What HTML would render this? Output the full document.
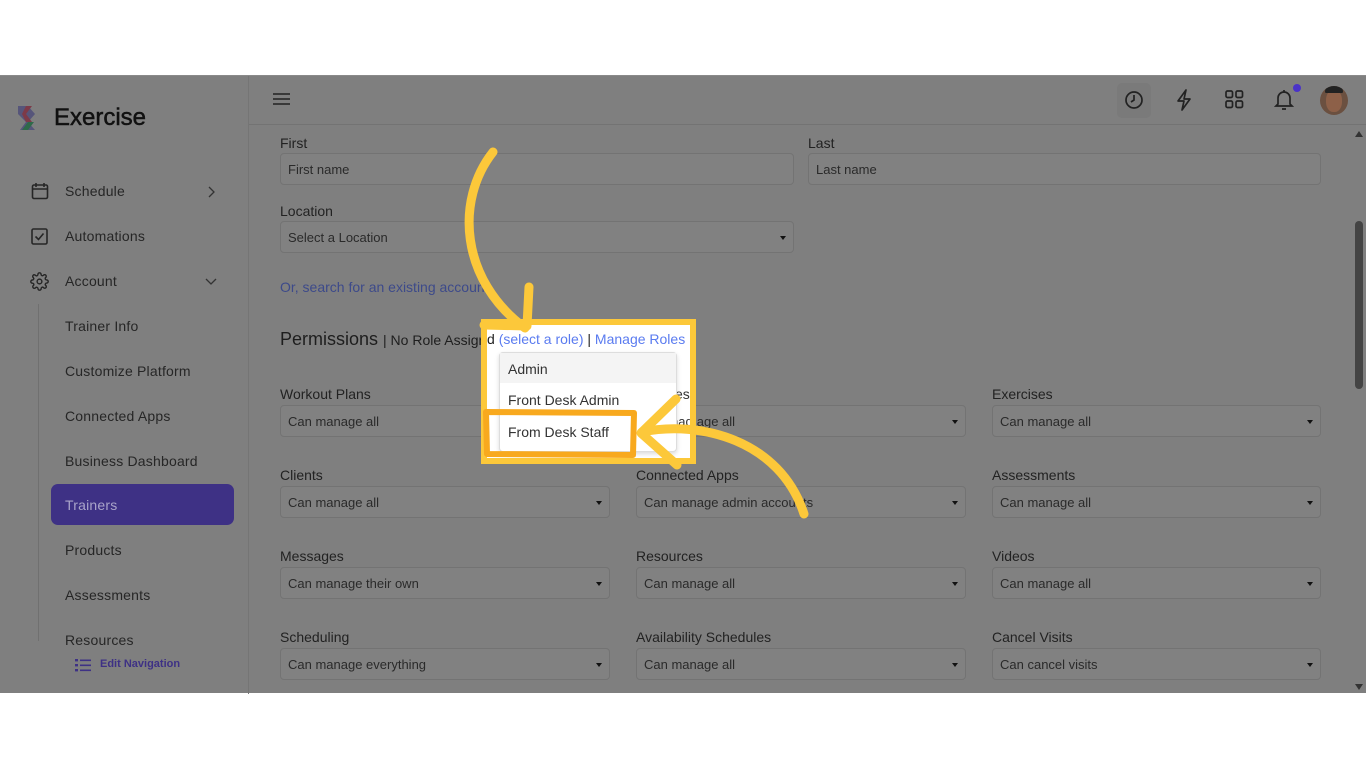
<!DOCTYPE html>
<html><head><meta charset="utf-8"><style>
*{box-sizing:border-box;margin:0;padding:0}
body{width:1366px;height:768px;background:#fff;position:relative;overflow:hidden;font-family:"Liberation Sans",Arial,sans-serif}
.app{position:absolute;left:0;top:75px;width:1366px;height:618px;background:#7f7f7f;border-top:1px solid #8a8a8a}
.side{position:absolute;left:0;top:0;width:249px;height:618px;border-right:1px solid #757575}
.a{position:absolute}
.nav{position:absolute;left:65px;font-size:14px;color:#262626;letter-spacing:.2px}
.lbl{position:absolute;font-size:14px;color:#222}
.in{position:absolute;height:32px;border:1px solid #737373;border-radius:4px;background:#818181;font-size:13px;color:#2a2a2a;padding:8px 7px;line-height:15px}
.in.s:after{content:"";position:absolute;right:7px;top:14px;border:3px solid transparent;border-top:4px solid #111}
</style></head><body>
<div class="app">
 <div class="side">
  <svg class="a" style="left:17px;top:28px" width="28" height="30" viewBox="0 0 28 30"><path d="M1 2h10l7 8-7 8 7 8H3l6-8-8-8z" fill="#56557a"/><path d="M9 2h6l-6 8 6 8H9l-4-8z" fill="#7d3a48"/><path d="M11 18h6l-6 8h-6z" fill="#2f6a4a"/></svg>
  <div class="a" style="left:54px;top:28px;font-size:24px;color:#111;-webkit-text-stroke:.5px #111">Exercise</div>
  <svg class="a" style="left:31px;top:106px" width="18" height="18" viewBox="0 0 18 18" fill="none" stroke="#262626" stroke-width="1.6"><rect x="1.5" y="3" width="15" height="13.5" rx="1.5"/><path d="M1.5 7h15M5 1v4M13 1v4"/></svg>
  <div class="nav" style="top:107px">Schedule</div>
  <svg class="a" style="left:206px;top:110px" width="10" height="12" viewBox="0 0 10 12" fill="none" stroke="#333" stroke-width="1.3"><path d="M3 1l5 5-5 5"/></svg>
  <svg class="a" style="left:31px;top:152px" width="17" height="17" viewBox="0 0 17 17" fill="none" stroke="#262626" stroke-width="1.6"><rect x="1" y="1" width="15" height="15" rx="1.5"/><path d="M4.5 8.5l3 3 5-6"/></svg>
  <div class="nav" style="top:152px">Automations</div>
  <svg class="a" style="left:30px;top:196px" width="19" height="19" viewBox="0 0 24 24" fill="none" stroke="#262626" stroke-width="1.8"><circle cx="12" cy="12" r="3"/><path d="M19.4 15a1.7 1.7 0 00.3 1.8l.1.1a2 2 0 11-2.8 2.8l-.1-.1a1.7 1.7 0 00-1.8-.3 1.7 1.7 0 00-1 1.5V21a2 2 0 11-4 0v-.1a1.7 1.7 0 00-1.1-1.5 1.7 1.7 0 00-1.8.3l-.1.1a2 2 0 11-2.8-2.8l.1-.1a1.7 1.7 0 00.3-1.8 1.7 1.7 0 00-1.5-1H3a2 2 0 110-4h.1a1.7 1.7 0 001.5-1.1 1.7 1.7 0 00-.3-1.8l-.1-.1a2 2 0 112.8-2.8l.1.1a1.7 1.7 0 001.8.3H9a1.7 1.7 0 001-1.5V3a2 2 0 114 0v.1a1.7 1.7 0 001 1.5 1.7 1.7 0 001.8-.3l.1-.1a2 2 0 112.8 2.8l-.1.1a1.7 1.7 0 00-.3 1.8V9a1.7 1.7 0 001.5 1H21a2 2 0 110 4h-.1a1.7 1.7 0 00-1.5 1z"/></svg>
  <div class="nav" style="top:197px">Account</div>
  <svg class="a" style="left:205px;top:200px" width="12" height="10" viewBox="0 0 12 10" fill="none" stroke="#333" stroke-width="1.3"><path d="M1 3l5 5 5-5"/></svg>
  <div class="a" style="left:38px;top:228px;width:1px;height:337px;background:#707070"></div>
  <div class="nav" style="top:242px">Trainer Info</div>
  <div class="nav" style="top:287px">Customize Platform</div>
  <div class="nav" style="top:332px">Connected Apps</div>
  <div class="nav" style="top:377px">Business Dashboard</div>
  <div class="a" style="left:51px;top:408px;width:183px;height:41px;background:#3e3185;border-radius:7px"></div>
  <div class="nav" style="top:421px;color:#a9a4c9">Trainers</div>
  <div class="nav" style="top:466px">Products</div>
  <div class="nav" style="top:511px">Assessments</div>
  <div class="nav" style="top:556px">Resources</div>
  <svg class="a" style="left:75px;top:582px" width="16" height="14" viewBox="0 0 16 14" fill="#3e3185"><rect x="0" y="1" width="3" height="2.4"/><rect x="0" y="6" width="3" height="2.4"/><rect x="0" y="11" width="3" height="2.4"/><rect x="5" y="1.5" width="11" height="1.6"/><rect x="5" y="6.5" width="11" height="1.6"/><rect x="5" y="11.5" width="11" height="1.6"/></svg>
  <div class="a" style="left:100px;top:582px;font-size:11px;color:#3e3185;font-weight:bold">Edit Navigation</div>
 </div>
 <div class="a" style="left:249px;top:48px;width:1117px;height:1px;background:#737373"></div>
 <svg class="a" style="left:273px;top:16px" width="17" height="14" viewBox="0 0 17 14" stroke="#222" stroke-width="1.6"><path d="M0 2h17M0 7h17M0 12h17"/></svg>
 <div class="a" style="left:1117px;top:7px;width:34px;height:35px;background:#7a7a7a;border-radius:5px"></div>
 <svg class="a" style="left:1124px;top:14px" width="20" height="20" viewBox="0 0 20 20" fill="none" stroke="#222" stroke-width="1.7"><circle cx="10" cy="10" r="8"/><path d="M10 5v5l-3 2"/></svg>
 <svg class="a" style="left:1175px;top:13px" width="18" height="22" viewBox="0 0 18 22" fill="none" stroke="#222" stroke-width="1.7" stroke-linejoin="round"><path d="M11 1L3 12h6l-2 9 8-11H9z"/></svg>
 <svg class="a" style="left:1225px;top:14px" width="19" height="19" viewBox="0 0 19 19" fill="none" stroke="#222" stroke-width="1.7"><rect x="1" y="1" width="6.5" height="6.5" rx="1.5"/><rect x="11" y="1" width="6.5" height="6.5" rx="1.5"/><rect x="1" y="11" width="6.5" height="6.5" rx="1.5"/><rect x="11" y="11" width="6.5" height="6.5" rx="1.5"/></svg>
 <svg class="a" style="left:1274px;top:13px" width="20" height="22" viewBox="0 0 20 22" fill="none" stroke="#222" stroke-width="1.7"><path d="M4 15V9a6 6 0 0112 0v6l2 2H2z M8 20h4M10 1v2"/></svg>
 <div class="a" style="left:1293px;top:8px;width:8px;height:8px;border-radius:50%;background:#4a32c8"></div>
 <div class="a" style="left:1320px;top:10px;width:28px;height:29px;border-radius:50%;background:#6b5040;overflow:hidden"><div class="a" style="left:6px;top:4px;width:16px;height:22px;border-radius:45%;background:#8d6048"></div><div class="a" style="left:5px;top:0;width:18px;height:7px;background:#222;border-radius:8px 8px 2px 2px"></div></div>
 <div class="a" style="left:1355px;top:55px;border:4px solid transparent;border-bottom:6px solid #333;border-top:0"></div>
 <div class="a" style="left:1355px;top:145px;width:8px;height:168px;background:#444;border-radius:4px"></div>
 <div class="a" style="left:1355px;top:608px;border:4px solid transparent;border-top:6px solid #333;border-bottom:0"></div>

 <div class="lbl" style="left:280px;top:59px">First</div>
 <div class="in" style="left:280px;top:77px;width:514px">First name</div>
 <div class="lbl" style="left:808px;top:59px">Last</div>
 <div class="in" style="left:808px;top:77px;width:513px">Last name</div>
 <div class="lbl" style="left:280px;top:127px">Location</div>
 <div class="in s" style="left:280px;top:145px;width:514px">Select a Location</div>
 <div class="a" style="left:280px;top:203px;font-size:14px;color:#3d4a8a">Or, search for an existing account</div>
 <div class="a" style="left:280px;top:253px;font-size:18px;color:#1e1e1e">Permissions <span style="font-size:14px">| No Role Assigned</span></div>

 <div class="lbl" style="left:280px;top:310px">Workout Plans</div><div class="in s" style="left:280px;top:329px;width:330px">Can manage all</div>
 <div class="lbl" style="left:636px;top:310px">Activities</div><div class="in s" style="left:636px;top:329px;width:330px">Can manage all</div>
 <div class="lbl" style="left:992px;top:310px">Exercises</div><div class="in s" style="left:992px;top:329px;width:329px">Can manage all</div>
 <div class="lbl" style="left:280px;top:391px">Clients</div><div class="in s" style="left:280px;top:410px;width:330px">Can manage all</div>
 <div class="lbl" style="left:636px;top:391px">Connected Apps</div><div class="in s" style="left:636px;top:410px;width:330px">Can manage admin accounts</div>
 <div class="lbl" style="left:992px;top:391px">Assessments</div><div class="in s" style="left:992px;top:410px;width:329px">Can manage all</div>
 <div class="lbl" style="left:280px;top:472px">Messages</div><div class="in s" style="left:280px;top:491px;width:330px">Can manage their own</div>
 <div class="lbl" style="left:636px;top:472px">Resources</div><div class="in s" style="left:636px;top:491px;width:330px">Can manage all</div>
 <div class="lbl" style="left:992px;top:472px">Videos</div><div class="in s" style="left:992px;top:491px;width:329px">Can manage all</div>
 <div class="lbl" style="left:280px;top:553px">Scheduling</div><div class="in s" style="left:280px;top:572px;width:330px">Can manage everything</div>
 <div class="lbl" style="left:636px;top:553px">Availability Schedules</div><div class="in s" style="left:636px;top:572px;width:330px">Can manage all</div>
 <div class="lbl" style="left:992px;top:553px">Cancel Visits</div><div class="in s" style="left:992px;top:572px;width:329px">Can cancel visits</div>
</div>

<!-- highlighted box -->
<div class="a" style="left:481px;top:319px;width:215px;height:145px;background:#fff;border:6px solid #fcc83a;overflow:hidden">
 <div class="a" style="left:0px;top:6px;font-size:14px;color:#222;white-space:nowrap">d <span style="color:#5a7bf0">(select a role)</span> | <span style="color:#5a7bf0">Manage Roles</span></div>
 <div class="a" style="left:188px;top:61px;font-size:14px;color:#333;white-space:nowrap">es</div>
 <div class="a" style="left:184px;top:89px;font-size:13px;color:#333;white-space:nowrap">nage all</div>
 <div class="a" style="left:12px;top:27px;width:178px;height:100px;border:1px solid #ddd;border-radius:4px;background:#fff;box-shadow:0 2px 5px rgba(0,0,0,.15)">
  <div style="height:30px;background:#f4f4f4;padding:8px 8px;font-size:14px;color:#333">Admin</div>
  <div style="height:32px;padding:9px 8px;font-size:14px;color:#333">Front Desk Admin</div>
  <div style="height:32px;padding:9px 8px;font-size:14px;color:#333">From Desk Staff</div>
 </div>
</div>
<svg class="a" style="left:0;top:0" width="1366" height="768" fill="none" stroke="#fcc83a" stroke-linecap="round" stroke-linejoin="round">
 <path d="M486 412 L634 413 L633 455 L487 454 Z" stroke="#f8a91e" stroke-width="6"/>
 <path d="M493 152 C455 200 460 280 525 328" stroke-width="9"/>
 <path d="M529 287 L527 326 L484 325" stroke-width="9"/>
 <path d="M804 514 C780 440 700 420 642 432" stroke-width="9"/>
 <path d="M676 399 L641 433 L677 465" stroke-width="9"/>
</svg>
</body></html>
